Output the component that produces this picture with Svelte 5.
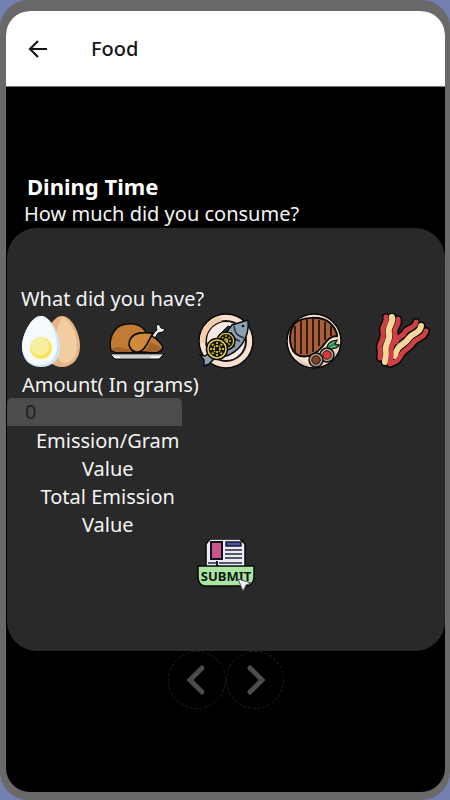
<script>
  let amount = $state('');
  let selected = $state('egg');
  const foods = ['egg', 'chicken', 'fish', 'steak', 'bacon'];
  const rashers = [
    { d: 'M45 9c-1 7-8 5-11 10-2 5-7 4-9 10', color: '#cf4044', width: 5 },
    { d: 'M50 13c-1 8-8 6-12 12-4 7-12 6-14 18', color: '#f3d89b', width: 6 },
    { d: 'M55 18c-2 8-9 6-13 12-4 7-10 6-13 14-2 4-4 5-8 6', color: '#cf4044', width: 5 },
    { d: 'M15 4c2 7-5 8-3 15 2 8-5 11-3 17 1 4 0 5 0 9', color: '#cf4044', width: 5 },
    { d: 'M21 4c2 7-5 9-3 16 2 8-5 11-3 18 1 5-1 7-1 11', color: '#f3d89b', width: 6 },
    { d: 'M27 6c2 6-5 8-3 15 2 8-5 10-4 17 1 6-1 8-1 13', color: '#cf4044', width: 5 }
  ];
</script>

<div class="device">
  <div class="screen">
    <header>
      <button class="back" aria-label="Back">
        <svg width="20" height="20" viewBox="0 0 20 20" fill="none" stroke="#161616" stroke-width="2.2">
          <path d="M19 10H2M10 2L2 10l8 8" />
        </svg>
      </button>
      <h1>Food</h1>
    </header>

    <main>
      <div class="intro">
        <h2>Dining Time</h2>
        <p>How much did you consume?</p>
      </div>

      <section class="panel">
        <p class="question">What did you have?</p>
        <div class="foods">
          {#each foods as food}
            <button class="food" aria-label={food} aria-pressed={selected === food} onclick={() => (selected = food)}>
              <svg width="60" height="58" viewBox="0 0 60 58">
                {#if food === 'egg'}
                  <path d="M41 3c10 0 18 18 18 30 0 13-8 21-18 21S23 46 23 33C23 22 31 3 41 3z" fill="#e9b384" />
                  <path d="M42 4c8 4 14 19 14 29s-5 16-12 18c-7-3-10-9-10-18 0-10 3-24 8-29z" fill="#f2cda2" />
                  <path d="M20 3c10 0 19 19 19 31 0 13-8 20-19 20S1 47 1 34C1 22 10 3 20 3z" fill="#cbe5f3" />
                  <path d="M20 3c9 0 16 18 16 30s-7 19-17 19S1 45 1 33C1 22 10 3 20 3z" fill="#f5faff" />
                  <circle cx="20" cy="35" r="11" fill="#f6e65c" />
                  <circle cx="19" cy="33" r="9" fill="#f7efa4" />
                {:else if food === 'chicken'}
                  <path d="M39 31C44 24 45 20 49 17l-1-4 3-2 2 4 4 1-2 3-5 1-7 12z" fill="#eee" stroke="#080808" />
                  <path d="M3 38C0 24 7 11 20 11c9-1 16 3 18 9 6 2 12 6 17 14-1 5-8 7-14 5H8z" fill="#c27b35" stroke="#080808" stroke-width="1.4" />
                  <path d="M4 36c5-5 12 1 18 0l3 3H7z" fill="#a5632b" />
                  <path d="M43 29l11 6c-4 4-11 5-17 3z" fill="#a5632b" />
                  <path d="M45 20c-7 0-17-2-22 5-4 6-1 13 5 14 9 1 13-13 17-19z" fill="#d18a3b" stroke="#080808" stroke-width="1.6" />
                  <path d="M2 41h54l-5 5H7z" fill="#f4f1f2" stroke="#080808" />
                  <path d="M4 42h50M12 44h31" stroke="#aaa" />
                {:else if food === 'fish'}
                  <circle cx="30" cy="28" r="27" fill="#f8dfd0" stroke="#090909" stroke-width="1.5" />
                  <circle cx="30" cy="28" r="20" fill="#f9e9e4" stroke="#161616" stroke-width="2" />
                  <path d="M7 30a23 23 0 0 1 18-24" fill="none" stroke="#f5cca8" stroke-width="5" />
                  <path d="M24 21l8-8 6 2-7 10z" fill="#27313a" stroke="#090909" />
                  <path d="M52 7L36 12 17 37 9 43l-5-1 4 5v6l5-2 5-5 9-2C43 40 54 25 52 7z" fill="#8da0b0" stroke="#0c1014" stroke-width="1.5" />
                  <path d="M38 13c1 8 4 10 10 12M35 19c1 5 4 8 9 9M31 23c1 6 4 9 8 11" fill="none" stroke="#24313c" stroke-width="1.6" />
                  <circle cx="47" cy="13" r="1.3" fill="#101519" />
                  <circle cx="30" cy="28" r="9" fill="#e3c84d" stroke="#090909" stroke-width="1.5" />
                  <circle cx="30" cy="28" r="7" fill="#171711" />
                  <path d="M24 28h12M30 22v12M26 24l8 8M34 24l-8 8" stroke="#d5b630" stroke-width="1.3" stroke-dasharray="2 1" />
                  <circle cx="21" cy="36" r="10.5" fill="#eed45d" stroke="#090909" stroke-width="1.5" />
                  <circle cx="21" cy="36" r="8.3" fill="#17170f" />
                  <path d="M14 36h5M23 36h5M21 29v5M21 38v5M16 31l3 3M26 31l-3 3M16 41l3-3M26 41l-3-3" stroke="#d5b630" stroke-width="1.8" stroke-dasharray="2 1" />
                {:else if food === 'steak'}
                  <circle cx="30" cy="28" r="27" fill="#f6e4d2" stroke="#090909" stroke-width="1.5" />
                  <path d="M48 14a23 23 0 1 1-35 31" fill="none" stroke="#e6cdb4" stroke-width="2" />
                  <path d="M10 11C18 3 38 3 46 10c4 4 7 9 7 13-8 0-11 6-15 11-5 6-12 11-22 9C4 39 4 20 10 11z" fill="#a95e3b" stroke="#0b0907" stroke-width="2" />
                  <path d="M11 13v27M17 7v34M23 6v35M29 6v33M35 7v26M41 9v18M47 13v10" stroke="#26140e" stroke-width="1.8" />
                  <path d="M43 34c2-6 5-6 10-7l-2 4 5 1-4 3-9 2z" fill="#338c58" stroke="#0b1610" stroke-width="1.2" />
                  <path d="M45 32l5-3M46 35l6-2" stroke="#80bf83" />
                  <circle cx="43" cy="42" r="7" fill="#a89f93" stroke="#111" stroke-width="1.5" />
                  <circle cx="43" cy="42" r="4.2" fill="#df3836" stroke="#302020" />
                  <circle cx="32" cy="47" r="7" fill="#a89f93" stroke="#111" stroke-width="1.5" />
                  <circle cx="32" cy="47" r="4.2" fill="#824128" stroke="#24110b" />
                {:else}
                  <g fill="none">
                    {#each rashers as rasher}
                      <path d={rasher.d} stroke="#080808" stroke-width={rasher.width + 3} stroke-linecap="round" />
                    {/each}
                    {#each rashers as rasher}
                      <path d={rasher.d} stroke={rasher.color} stroke-width={rasher.width} stroke-linecap="round" />
                    {/each}
                  </g>
                {/if}
              </svg>
            </button>
          {/each}
        </div>

        <div class="details">
          <label for="amount">Amount( In grams)</label>
          <input id="amount" type="text" inputmode="numeric" placeholder="0" bind:value={amount} />
          <dl>
            <dt>Emission/Gram</dt>
            <dd>Value</dd>
            <dt>Total Emission</dt>
            <dd>Value</dd>
          </dl>
        </div>

        <button class="submit" aria-label="Submit">
          <svg width="60" height="52" viewBox="0 0 60 52">
            <path d="M10 29V5l4-5h30l5 5v24z" fill="#ebebf7" stroke="#080808" stroke-width="1.5" />
            <path d="M15 3h11v17H15z" fill="#c9578e" stroke="#14121b" stroke-width="2" />
            <path d="M30 3h15v4H30z" fill="#4653a6" stroke="#141923" stroke-width="1.4" />
            <path d="M29 11h17M29 15h17M29 19h17M12 24h8M23 24h23" stroke="#555763" stroke-width="2" />
            <path d="M21 22v6" stroke="#171820" stroke-width="2" />
            <path d="M2 27h56v11q0 5-4 8l-5 1H9q-7-1-7-9z" fill="#a9e6a3" stroke="#080808" stroke-width="1.5" />
            <text x="30" y="42" text-anchor="middle">SUBMIT</text>
            <path d="M42 40l13 4-5 2-3 6z" fill="#f4f0fa" stroke="#55545c" />
          </svg>
        </button>
      </section>

      <nav aria-label="Pages">
        <button aria-label="Previous">
          <svg width="56" height="56" viewBox="1 1 56 56"><path d="M34 17L22 29l12 12" /></svg>
        </button>
        <button aria-label="Next">
          <svg width="56" height="56" viewBox="1 1 56 56"><path d="M24 17l12 12-12 12" /></svg>
        </button>
      </nav>
    </main>
  </div>
</div>

<style>
  :global(body) {
    margin: 0;
    background: #7480b0;
  }
  * {
    box-sizing: border-box;
  }
  .device {
    display: flex;
    min-height: 100vh;
    padding: 11px 5px 8px 6px;
    border-radius: 28px;
    background: #696969;
    color: #f4f4f4;
    font: 20px/28px "Noto Sans", "Open Sans", sans-serif;
  }
  .screen {
    flex: 1;
    min-width: 0;
    overflow: hidden;
    border-radius: 24px;
    background: #000;
  }
  button {
    display: block;
    padding: 0;
    border: 0;
    background: none;
    cursor: pointer;
  }
  svg {
    display: block;
  }
  header {
    display: flex;
    align-items: center;
    gap: 43px;
    height: 76px;
    padding: 0 22px;
    border-bottom: 1px solid #777;
    background: #fff;
    color: #161616;
  }
  h1, h2, p, dl, dd {
    margin: 0;
  }
  h1 {
    font-size: 20px;
    font-weight: 500;
  }
  main {
    padding-left: 1px;
  }
  .intro {
    padding: 85px 17px 0;
  }
  h2 {
    padding-left: 3px;
    font-size: 22px;
    line-height: 28px;
    font-weight: 700;
    color: #fff;
  }
  .panel {
    padding: 57px 0 60px;
    border-radius: 30px;
    background: #292929;
  }
  .question {
    padding-left: 14px;
  }
  .foods {
    display: grid;
    grid-template-columns: repeat(5, 1fr);
    justify-items: center;
  }
  .details {
    display: flex;
    flex-direction: column;
    align-items: flex-start;
  }
  label {
    padding-left: 15px;
    line-height: 27px;
  }
  input {
    width: 40%;
    height: 28px;
    padding: 0 18px;
    border: 0;
    border-radius: 5px 5px 0 0;
    outline: 0;
    background: #4c4c4c;
    color: #fff;
    font: inherit;
  }
  input::placeholder {
    color: #202020;
    opacity: 1;
  }
  dl {
    min-width: 46%;
    padding-top: 1px;
    text-align: center;
  }
  .submit {
    margin: 0 auto;
  }
  .submit text {
    font: bold 13px "Noto Sans", sans-serif;
    fill: #10180f;
  }
  nav {
    display: flex;
    justify-content: center;
  }
  nav button {
    border: 1px dashed #202020;
    border-radius: 50%;
  }
  nav path {
    fill: none;
    stroke: #4c4c4c;
    stroke-width: 5;
    stroke-linecap: round;
  }
</style>
